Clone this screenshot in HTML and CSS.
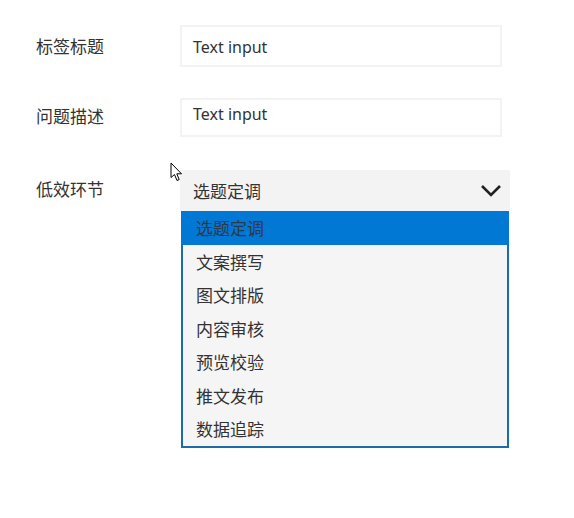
FILE: index.html
```html
<!DOCTYPE html>
<html lang="zh">
<head>
<meta charset="utf-8">
<title>Form</title>
<link rel="stylesheet" href="styles.css">
</head>
<body>
<div class="form">
  <div class="row row-title">
    <div class="label">标签标题</div>
    <div class="input input-title">Text input</div>
  </div>
  <div class="row row-desc">
    <div class="label">问题描述</div>
    <div class="input input-desc">Text input</div>
  </div>
  <div class="row row-select">
    <div class="label">低效环节</div>
    <div class="select-wrap">
      <div class="select">
        <span>选题定调</span>
        <svg class="chevron" width="22" height="14" viewBox="0 0 22 14"><path d="M2 2 L11 11 L20 2" fill="none" stroke="#222" stroke-width="2.6"/></svg>
      </div>
      <div class="menu">
        <div class="item selected">选题定调</div>
        <div class="item">文案撰写</div>
        <div class="item">图文排版</div>
        <div class="item">内容审核</div>
        <div class="item">预览校验</div>
        <div class="item">推文发布</div>
        <div class="item">数据追踪</div>
      </div>
      <svg class="cursor" width="14" height="20" viewBox="0 0 14 20"><path d="M1 1 L1 15.5 L4.5 12.5 L7 18.5 L9.2 17.5 L6.8 11.8 L11.5 11.8 Z" fill="#fff" stroke="#000" stroke-width="1" stroke-linejoin="round"/></svg>
    </div>
  </div>
</div>
</body>
</html>
```
FILE: styles.css
```css
html, body {
  margin: 0;
  background: #ffffff;
}
body {
  font-family: "Noto Sans CJK SC", "Noto Sans", sans-serif;
  color: #333333;
  font-size: 17px;
}
.form {
  padding: 25px 0 60px 36px;
  display: flex;
  flex-direction: column;
}
.row {
  display: flex;
  align-items: center;
}
.label {
  width: 144px;
  line-height: 20px;
}
.input {
  box-sizing: border-box;
  width: 322px;
  border: 2px solid #f3f3f3;
  background: #fff;
  padding-left: 11px;
  font-family: "Noto Sans", sans-serif;
  font-size: 16px;
  color: #333;
}
.input-title {
  height: 42px;
  line-height: 40px;
}
.row-desc {
  margin-top: 31px;
}
.row-desc .label {
  margin-top: -3px;
}
.input-desc {
  height: 39px;
  line-height: 28px;
}
.row-select {
  margin-top: 33px;
  align-items: flex-start;
}
.row-select .label {
  margin-top: 9px;
}
.select-wrap {
  position: relative;
  width: 330px;
}
.select {
  box-sizing: border-box;
  height: 41px;
  background: #f3f3f3;
  display: flex;
  align-items: center;
  justify-content: space-between;
  padding: 0 8px 0 13px;
}
.chevron {
  display: block;
}
.menu {
  margin-left: 1px;
  width: 328px;
  box-sizing: border-box;
  background: #f5f5f5;
  border: 2px solid #1c6ca8;
  border-top: none;
}
.item {
  height: 33.5px;
  line-height: 33.5px;
  padding-left: 13px;
}
.item.selected {
  background: #0078d4;
  margin: 0 -2px;
  padding-left: 15px;
  color: #2b3a4a;
}
.cursor {
  position: absolute;
  left: -10px;
  top: -8px;
}
```
